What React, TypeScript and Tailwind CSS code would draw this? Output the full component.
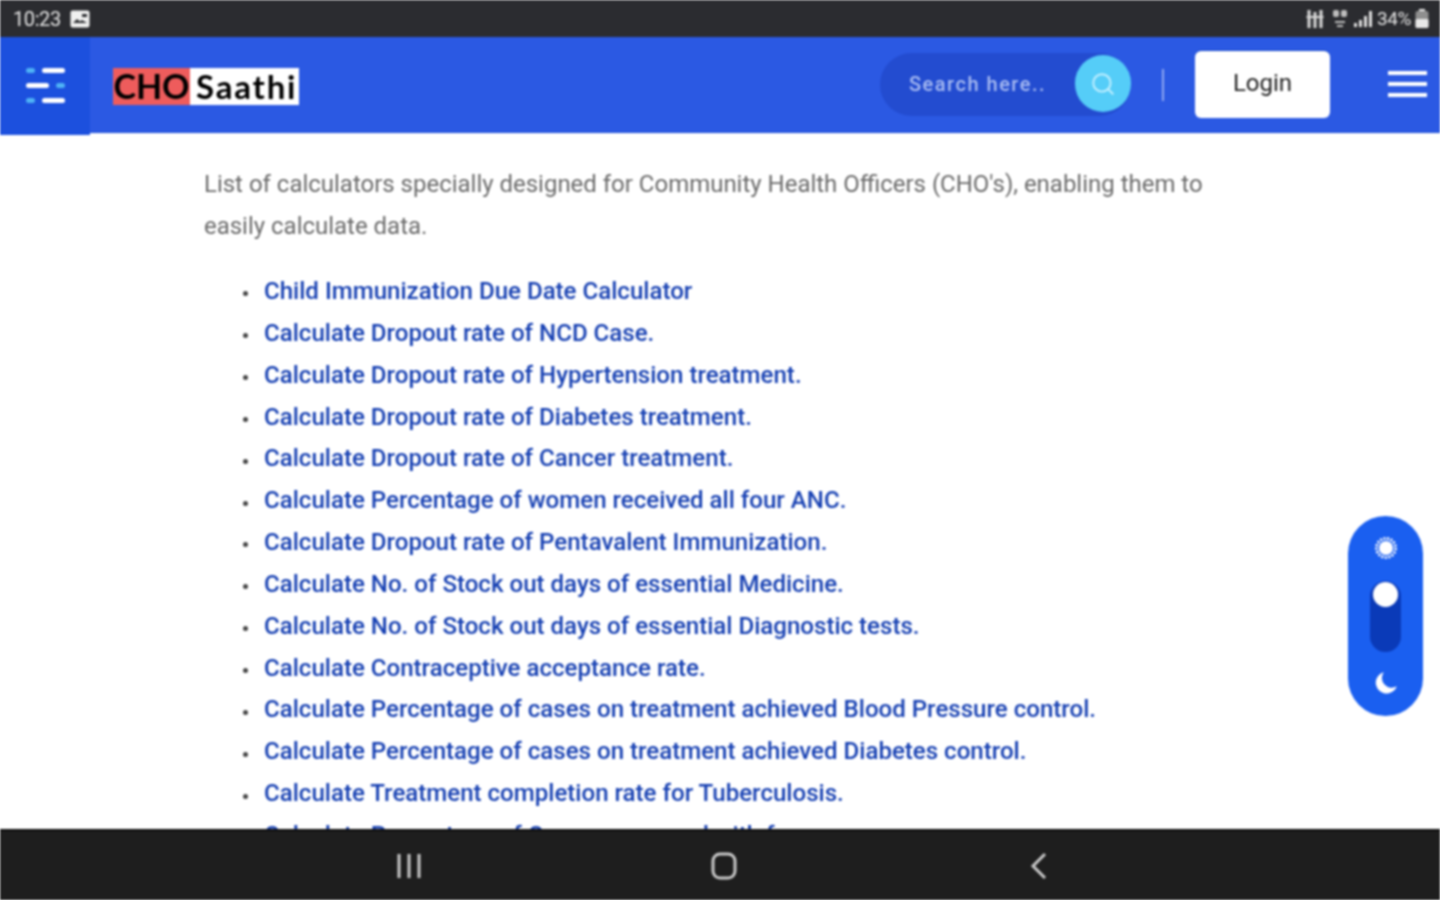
import React from 'react';
import { Search } from 'lucide-react';

const links = [
  'Child Immunization Due Date Calculator',
  'Calculate Dropout rate of NCD Case.',
  'Calculate Dropout rate of Hypertension treatment.',
  'Calculate Dropout rate of Diabetes treatment.',
  'Calculate Dropout rate of Cancer treatment.',
  'Calculate Percentage of women received all four ANC.',
  'Calculate Dropout rate of Pentavalent Immunization.',
  'Calculate No. of Stock out days of essential Medicine.',
  'Calculate No. of Stock out days of essential Diagnostic tests.',
  'Calculate Contraceptive acceptance rate.',
  'Calculate Percentage of cases on treatment achieved Blood Pressure control.',
  'Calculate Percentage of cases on treatment achieved Diabetes control.',
  'Calculate Treatment completion rate for Tuberculosis.',
  'Calculate Percentage of Cancer screened with four.',
];

function StatusBar() {
  return (
    <div className="h-[37px] shrink-0 bg-[#2b2c30] flex items-center justify-between pl-[13px] pr-[11px] text-[#e4e4e4]">
      <div className="flex items-center gap-[9px]">
        <span className="text-[20px] leading-none tracking-[-0.4px]">10:23</span>
        <svg width="20" height="18" viewBox="0 0 20 18">
          <rect x="0.5" y="0.5" width="19" height="17" rx="2" fill="#f0f0f0" />
          <path d="M3 13l4-4 3 2.5 2-1.5 5 3z" fill="#2b2c30" />
          <rect x="12" y="4" width="5" height="3" fill="#2b2c30" />
        </svg>
      </div>
      <div className="flex items-center gap-[4px]">
        <svg width="19" height="20" viewBox="0 0 18 20" fill="#d8d8d8">
          <rect x="1" y="1" width="3" height="18" />
          <rect x="7" y="3" width="3" height="16" />
          <rect x="13" y="1" width="3" height="18" />
          <rect x="0" y="7" width="17" height="2" />
        </svg>
        <svg width="16" height="20" viewBox="0 0 16 20" fill="#bdbdbd" className="ml-[3px]">
          <rect x="1" y="1" width="6" height="7" rx="2" />
          <rect x="9" y="1" width="6" height="7" rx="2" />
          <rect x="3" y="12" width="10" height="2" />
          <rect x="5" y="16" width="6" height="2" />
        </svg>
        <svg width="20" height="18" viewBox="0 0 20 18" fill="#dedede" className="ml-[1px]">
          <rect x="1" y="13" width="3" height="4" />
          <rect x="6" y="10" width="3" height="7" />
          <rect x="11" y="6" width="3" height="11" />
          <rect x="16" y="1" width="3" height="16" />
        </svg>
        <span className="text-[19px] leading-none tracking-[-0.4px]">34%</span>
        <svg width="14" height="20" viewBox="0 0 14 20" fill="#e8e8e8">
          <rect x="4" y="0" width="6" height="3" />
          <rect x="0.5" y="2" width="13" height="17" rx="2" fill="#8f8f8f" />
          <rect x="0.5" y="10" width="13" height="9" rx="1.5" />
        </svg>
      </div>
    </div>
  );
}

function Header() {
  return (
    <header className="h-[96px] shrink-0 bg-[#2b59e3] flex items-stretch border-b border-[#1d4ed8]">
      <div className="w-[90px] h-[98px] pb-[2px] bg-[#1c50de] flex flex-col justify-center items-center gap-[10px]">
        <div className="flex gap-[7px] items-center">
          <span className="w-[9px] h-[5px] rounded-full bg-[#4fb3f6]" />
          <span className="w-[23px] h-[5px] rounded-full bg-white" />
        </div>
        <div className="flex gap-[7px] items-center">
          <span className="w-[23px] h-[5px] rounded-full bg-white" />
          <span className="w-[9px] h-[5px] rounded-full bg-[#4fb3f6]" />
        </div>
        <div className="flex gap-[7px] items-center">
          <span className="w-[9px] h-[5px] rounded-full bg-[#4fb3f6]" />
          <span className="w-[23px] h-[5px] rounded-full bg-white" />
        </div>
      </div>

      {/* logo: two boxes, black text */}
      <div className="ml-[23px] mt-[31px] h-[37px] w-[186px] flex font-['Lato',sans-serif] font-bold text-black">
        <span className="w-[77px] bg-[#ee5c5c] text-center text-[34px] leading-[36px] tracking-[0px]">CHO</span>
        <span className="flex-1 bg-white pl-[6px] text-[33px] leading-[36px] tracking-[1.8px]">Saathi</span>
      </div>

      <div className="ml-auto flex items-center pr-[13px]">
        <div className="w-[251px] h-[63px] rounded-full bg-[#234cd0] flex items-center justify-between pl-[29px]">
          <span className="text-[20px] pb-[2px] tracking-[1.5px] text-[#a9bcf2] font-medium">Search here..</span>
          <span className="w-[56px] h-[57px] mb-[2px] rounded-full bg-[#55cdf8] flex items-center justify-center text-[#c5f0ff] shrink-0">
            <Search size={26} strokeWidth={1.75} />
          </span>
        </div>
        <span className="ml-[31px] w-[2px] h-[32px] bg-[#8ea6f0]" />
        <button className="ml-[31px] w-[135px] h-[67px] pb-[3px] rounded-[6px] bg-white text-[24px] text-[#222] shadow-[0_-1px_0_#1546c8]">
          Login
        </button>
        <div className="ml-[58px] mb-[2px] w-[39px] flex flex-col gap-[7px]">
          <span className="h-[4px] bg-white" />
          <span className="h-[4px] bg-white" />
          <span className="h-[4px] bg-white" />
        </div>
      </div>
    </header>
  );
}

function ThemeToggle() {
  return (
    <div className="absolute left-[1348px] top-[383px] w-[75px] h-[200px] rounded-full bg-[#1a5ff0] flex flex-col items-center pt-[21px]">
      <svg width="22" height="22" viewBox="0 0 22 22">
        <circle cx="11" cy="11" r="7" fill="#ffffff" />
        <circle cx="11" cy="11" r="9.5" fill="none" stroke="#ffffff" strokeWidth="3" strokeDasharray="2 1.5" />
      </svg>
      <div className="relative mt-[22px] w-[31px] h-[71px] rounded-full bg-[#0a3ab8]">
        <span className="absolute left-[3px] top-[1px] w-[25px] h-[25px] rounded-full bg-white" />
      </div>
      <svg width="26" height="26" viewBox="0 0 24 24" className="mt-[18px]" fill="#ffffff">
        <path d="M10 2 A10 10 0 1 0 22 15 A9 9 0 0 1 10 2 Z" />
      </svg>
    </div>
  );
}

function NavBar() {
  return (
    <div className="h-[71px] shrink-0 bg-[#1e1e1e] border-t-2 border-[#0c0c0c] flex items-center text-[#c9c9c9]">
      <svg width="26" height="26" viewBox="0 0 26 26" fill="none" stroke="currentColor" strokeWidth="3" className="ml-[396px]">
        <path d="M3 1v24M13 1v24M23 1v24" />
      </svg>
      <svg width="28" height="28" viewBox="0 0 28 28" fill="none" stroke="currentColor" strokeWidth="3" className="ml-[288px]">
        <rect x="3" y="2" width="22" height="24" rx="7" />
      </svg>
      <svg width="18" height="28" viewBox="0 0 18 28" fill="none" stroke="currentColor" strokeWidth="3" className="ml-[292px]">
        <path d="M15 2L3 14l12 12" />
      </svg>
    </div>
  );
}

export default function App() {
  return (
    <div className="w-[1440px] h-[900px] overflow-hidden flex flex-col bg-white font-['Roboto',sans-serif] blur-[0.8px]">
      <StatusBar />
      <Header />
      <main className="relative flex-1 overflow-hidden pl-[204px] pr-[230px] pt-[30px]">
        <p className="text-[23.97px] leading-[42px] text-[#6a6a6a] w-[1006px]">
          List of calculators specially designed for Community Health Officers (CHO's), enabling them to easily calculate data.
        </p>
        <ul className="mt-[24px] pl-[39px] text-[24.09px] leading-[41.85px] font-medium text-[#153fb2]">
          {links.map(link => (
            <li key={link} className="flex items-center gap-[16px]">
              <span className="w-[5px] h-[5px] mt-[4px] rounded-full bg-[#444] shrink-0" />
              {link}
            </li>
          ))}
        </ul>
        <ThemeToggle />
      </main>
      <NavBar />
    </div>
  );
}
